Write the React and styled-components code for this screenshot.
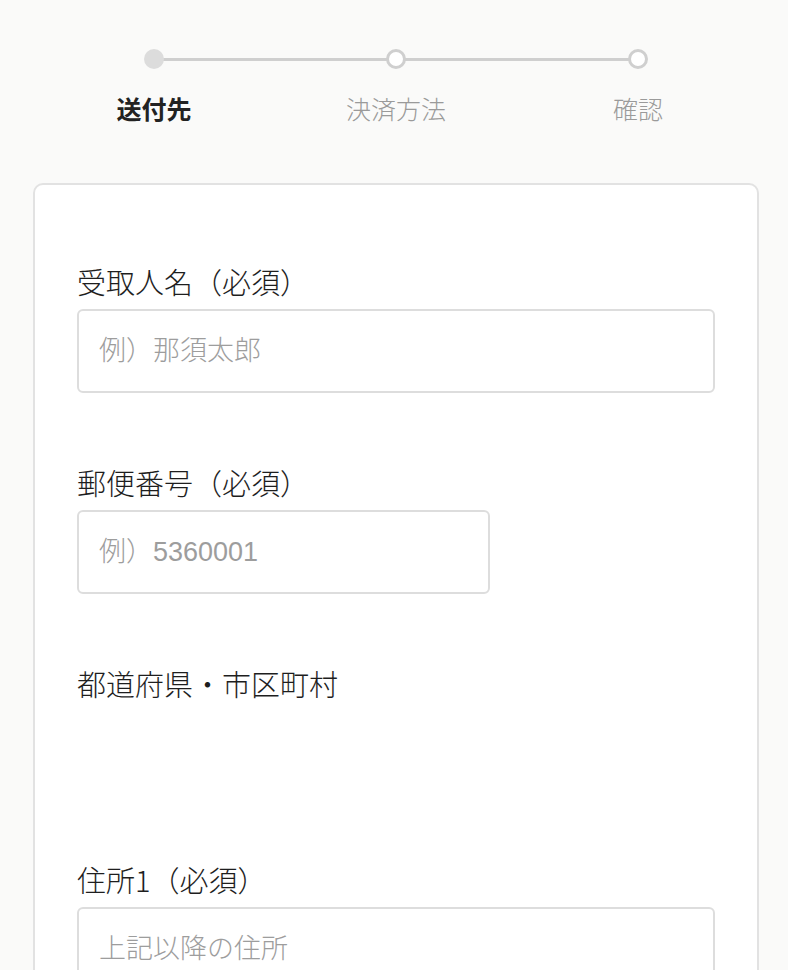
import React from "react";
import styled, { createGlobalStyle } from "styled-components";

const GlobalStyle = createGlobalStyle`
  html, body {
    margin: 0;
    padding: 0;
    background-color: #fafaf9;
    font-family: "Noto Sans CJK JP", "Noto Sans", sans-serif;
    color: #222;
  }
  * {
    box-sizing: border-box;
  }
`;

const Page = styled.div`
  padding: 49px 29px 0 33px;
  height: 970px;
  overflow: hidden;
`;

const Stepper = styled.ol`
  list-style: none;
  margin: 0 0 57px;
  padding: 0;
  display: grid;
  grid-template-columns: repeat(3, 1fr);
`;

const Step = styled.li`
  position: relative;
  display: flex;
  flex-direction: column;
  align-items: center;
  gap: 21px;

  &:not(:last-child)::after {
    content: "";
    position: absolute;
    top: 9px;
    left: 50%;
    width: 100%;
    height: 3px;
    background: #cfcfcf;
  }
`;

const Dot = styled.span`
  position: relative;
  z-index: 1;
  width: 20px;
  height: 20px;
  border-radius: 50%;
  background: ${(p) => (p.$done ? "#dcdcdc" : "#fff")};
  border: ${(p) => (p.$done ? "none" : "3px solid #cfcfcf")};
`;

const StepLabel = styled.span`
  font-size: 25px;
  line-height: 36px;
  font-weight: ${(p) => (p.$active ? 700 : 300)};
  color: ${(p) => (p.$active ? "#222" : "#9a9a9a")};
`;

const Card = styled.form`
  background: #fff;
  border: 2px solid #e2e2e2;
  border-radius: 10px;
  padding: 78px 42px 40px;
`;

const Field = styled.div`
  display: flex;
  flex-direction: column;
  gap: 10px;
  margin-bottom: 71px;
`;

const Label = styled.label`
  font-size: 29px;
  line-height: 36px;
  font-weight: 300;
  color: #1e1e1e;
`;

const Input = styled.input`
  width: ${(p) => p.$width || "100%"};
  height: 84px;
  border: 2px solid #dddddd;
  border-radius: 6px;
  background: #fff;
  padding: 0 20px;
  font-family: "Liberation Sans", "Noto Sans CJK JP", sans-serif;
  font-size: 27px;
  font-weight: 300;
  color: #222;
  outline: none;

  &::placeholder {
    color: #9d9d9d;
  }
`;

const EmptySlot = styled.div`
  height: 79px;
`;

const steps = [
  { label: "送付先", done: true, active: true },
  { label: "決済方法" },
  { label: "確認" },
];

export default function App() {
  return (
    <>
      <GlobalStyle />
      <Page>
        <Stepper>
          {steps.map((s) => (
            <Step key={s.label}>
              <Dot $done={s.done} />
              <StepLabel $active={s.active}>{s.label}</StepLabel>
            </Step>
          ))}
        </Stepper>
        <Card>
          <Field>
            <Label>受取人名（必須）</Label>
            <Input placeholder="例）那須太郎" />
          </Field>
          <Field>
            <Label>郵便番号（必須）</Label>
            <Input $width="413px" placeholder="例）5360001" />
          </Field>
          <Field>
            <Label>都道府県・市区町村</Label>
            <EmptySlot />
          </Field>
          <Field>
            <Label>住所1（必須）</Label>
            <Input placeholder="上記以降の住所" />
          </Field>
        </Card>
      </Page>
    </>
  );
}
